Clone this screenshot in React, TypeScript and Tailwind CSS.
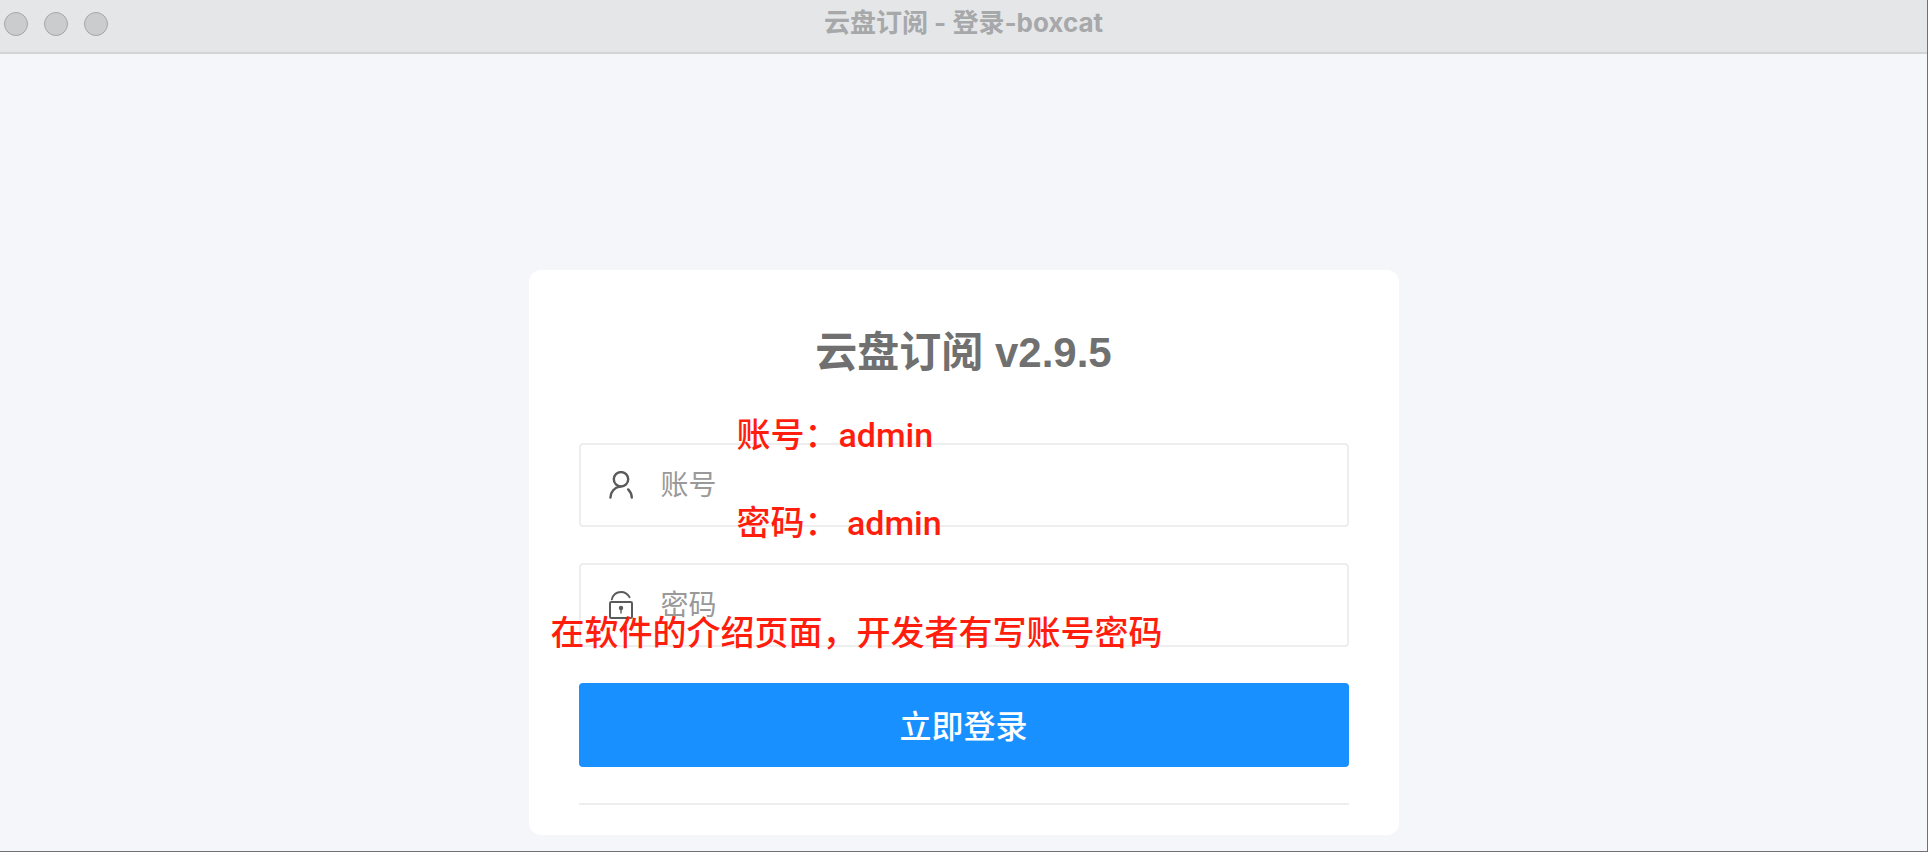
import { type ReactNode, useState } from "react";

interface FieldProps {
  id: string;
  type: string;
  label: string;
  icon: ReactNode;
  value: string;
  onChange: (value: string) => void;
  children?: ReactNode;
}

function UserIcon() {
  return (
    <svg width="24" height="28" viewBox="0 0 24 28" fill="none" stroke="#5a5a5a" strokeWidth="2.4" strokeLinecap="round">
      <circle cx="12" cy="8.3" r="7.2" />
      <path d="M1.4 26.6C1.6 20.8 5.4 16.4 11 15.6" />
      <path d="M19.2 18.4C21.4 20.6 22.6 23.4 22.8 26.6" />
    </svg>
  );
}

function LockIcon() {
  return (
    <svg width="24" height="28" viewBox="0 0 24 28" fill="none" stroke="#5a5a5a" strokeWidth="2" strokeLinecap="round">
      <rect x="1" y="11" width="22" height="16" rx="1.2" />
      <path d="M2.8 8.4C4 4 7.6 1 12 1c3.8 0 6.8 2 8.6 5.2" strokeWidth="1.8" />
      <circle cx="12" cy="17" r="2.2" fill="#5a5a5a" stroke="none" />
      <path d="M12 17.5v4.5" strokeWidth="1.4" />
    </svg>
  );
}

function Field({ id, type, label, icon, value, onChange, children }: FieldProps) {
  return (
    <div className="relative">
      <div className="flex h-[84px] items-center gap-7 rounded-sm border-2 border-[#eeeeee] bg-white pl-7 focus-within:border-[#d2d2d2]">
        <label htmlFor={id} aria-label={label}>
          {icon}
        </label>
        <input
          id={id}
          type={type}
          placeholder={label}
          value={value}
          onChange={(e) => onChange(e.target.value)}
          className="h-full min-w-0 flex-1 bg-transparent pt-0.5 text-[28px] text-[#333333] outline-none placeholder:text-[#999999]"
        />
      </div>
      {children}
    </div>
  );
}

export default function App() {
  const [account, setAccount] = useState("");
  const [password, setPassword] = useState("");

  return (
    <div className="flex min-h-screen flex-col border-r border-b border-[#6f7175] bg-[#f4f6fa] font-['Liberation_Sans','Noto_Sans_CJK_SC',sans-serif]">
      {/* Window title bar */}
      <header className="grid h-[54px] grid-cols-[1fr_auto_1fr] items-center border-b-2 border-[#d3d4d6] bg-[#e5e6e8] pb-1">
        <div className="flex gap-4 pl-1">
          <span className="size-6 rounded-full border border-[#a5a6a8] bg-[#cbccce]" />
          <span className="size-6 rounded-full border border-[#a5a6a8] bg-[#cbccce]" />
          <span className="size-6 rounded-full border border-[#a5a6a8] bg-[#cbccce]" />
        </div>
        <div className="pb-0.5 font-['Inter','Noto_Sans_CJK_SC',sans-serif] text-[26px] leading-8 font-bold text-[#a7a8aa]">
          云盘订阅 - 登录-boxcat
        </div>
      </header>

      <main className="flex flex-1 justify-center pt-[216px] pb-4">
        <form
          onSubmit={(e) => e.preventDefault()}
          className="w-full max-w-[870px] rounded-xl bg-white px-[50px] pt-[49px] pb-[30px]"
        >
          <h1 className="mb-14 text-center text-[42px] leading-[68px] font-bold text-[#707070]">
            云盘订阅 v2.9.5
          </h1>

          <div className="flex flex-col gap-9">
            <Field id="account" type="text" label="账号" icon={<UserIcon />} value={account} onChange={setAccount}>
              <Note className="-top-[25px] left-[158px]">账号：admin</Note>
              <Note className="top-[63px] left-[158px]">密码： admin</Note>
            </Field>
            <Field id="password" type="password" label="密码" icon={<LockIcon />} value={password} onChange={setPassword}>
              <Note className="top-[53px] -left-[28px]">在软件的介绍页面，开发者有写账号密码</Note>
            </Field>
            <button
              type="submit"
              className="h-[84px] rounded-sm bg-[#1890ff] pt-1 text-[32px] font-medium text-white hover:bg-[#40a0ff]"
            >
              立即登录
            </button>
            <hr className="border-t-2 border-[#eeeeee]" />
          </div>
        </form>
      </main>
    </div>
  );
}

// Red annotation laid over the form
function Note({ className, children }: { className: string; children: ReactNode }) {
  return (
    <p
      className={`pointer-events-none absolute z-10 font-['Roboto','Noto_Sans_CJK_SC',sans-serif] text-[34px] leading-[34px] font-medium whitespace-nowrap text-[#ff1d0e] ${className}`}
    >
      {children}
    </p>
  );
}
